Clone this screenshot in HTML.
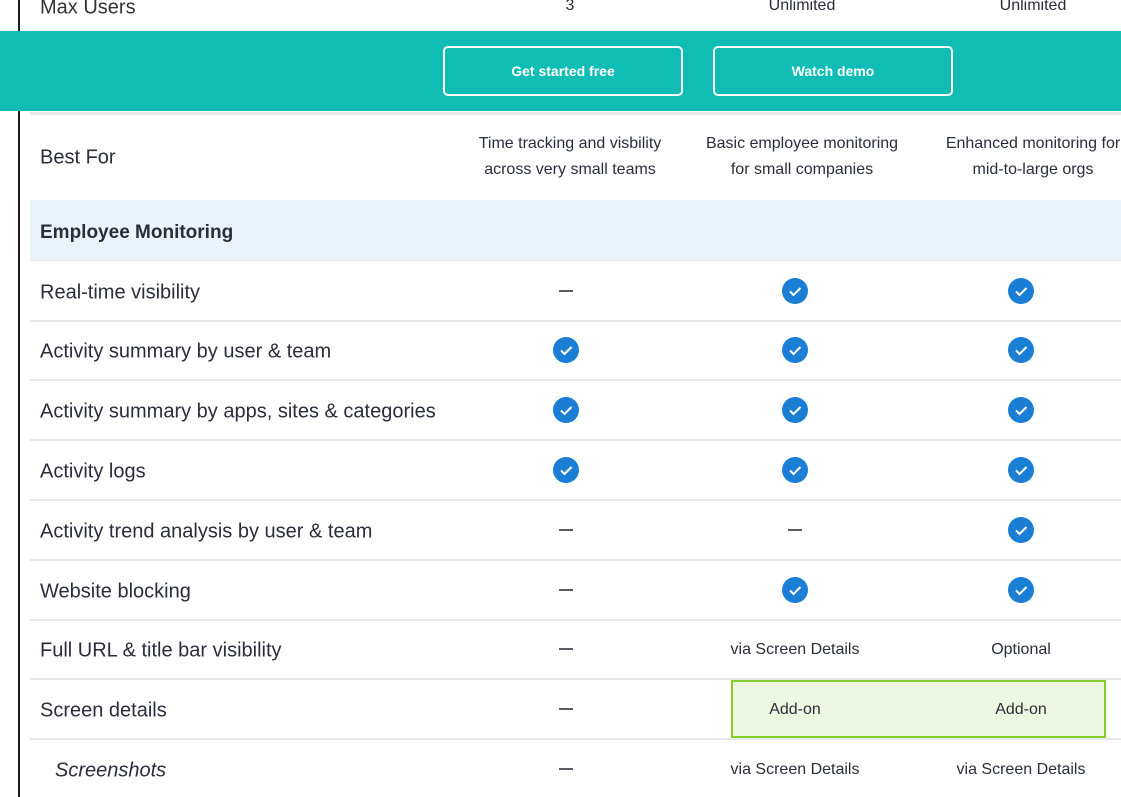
<!DOCTYPE html>
<html><head><meta charset="utf-8"><style>
*{margin:0;padding:0;box-sizing:border-box}
body{width:1121px;height:797px;overflow:hidden;background:#fff;font-family:"Liberation Sans",sans-serif;color:#2b2d3a;position:relative}
.a{position:absolute;white-space:nowrap}
.lbl{left:40px;font-size:20px;transform:translateY(-50%);margin-top:1px}
.c{transform:translate(-50%,-50%);text-align:center;margin-top:1px}
.sm{font-size:16px;line-height:26px}
.line{position:absolute;left:30px;right:0;height:2px;background:#e8e8ea}
.chk{position:absolute;width:26px;height:26px;margin:-13px 0 0 -13px;border-radius:50%;background:#1a7fd4}
.chk svg{position:absolute;left:0;top:0}
.dash{position:absolute;width:14px;height:2px;margin:-1px 0 0 -7px;background:#5a5c66}
.btn{position:absolute;top:46px;width:240px;height:50px;border:2px solid #fff;border-radius:5px;color:#fff;font-size:14px;font-weight:bold;text-align:center;line-height:46px}
</style></head><body>
<div class="a" style="left:18px;top:0;width:2px;height:797px;background:#1e1e1e"></div>

<div class="a lbl" style="top:7px;color:#333">Max Users</div>
<div class="a c sm" style="left:570px;top:5px">3</div>
<div class="a c sm" style="left:802px;top:5px">Unlimited</div>
<div class="a c sm" style="left:1033px;top:5px">Unlimited</div>

<div class="a lbl" style="top:74px">Data History</div>
<div class="a c sm" style="left:802px;top:64px">6 months</div>
<div class="a c" style="left:802px;top:87px;font-size:12px">(add-on available)</div>
<div class="a c sm" style="left:1033px;top:64px">6 months</div>
<div class="a c" style="left:1033px;top:87px;font-size:12px">(add-on available)</div>

<div class="a" style="left:0;top:31px;width:1121px;height:80px;background:#10bdb5"></div>
<div class="btn" style="left:443px">Get started free</div>
<div class="btn" style="left:713px">Watch demo</div>

<div class="line" style="top:112px;height:3px"></div>
<div class="a lbl" style="top:157px">Best For</div>
<div class="a c sm" style="left:570px;top:156px">Time tracking and visbility<br>across very small teams</div>
<div class="a c sm" style="left:802px;top:156px">Basic employee monitoring<br>for small companies</div>
<div class="a c sm" style="left:1033px;top:156px">Enhanced monitoring for<br>mid-to-large orgs</div>

<div class="a" style="left:30px;top:200px;right:0;height:61px;background:#eaf2fa"></div>
<div class="a lbl" style="top:232px;font-weight:bold;font-size:19px">Employee Monitoring</div>
<div class="line" style="top:260px;height:1px"></div>

<div class="a lbl" style="top:292px">Real-time visibility</div>
<div class="line" style="top:320px"></div>
<div class="a lbl" style="top:351px">Activity summary by user &amp; team</div>
<div class="line" style="top:379px"></div>
<div class="a lbl" style="top:411px">Activity summary by apps, sites &amp; categories</div>
<div class="line" style="top:439px"></div>
<div class="a lbl" style="top:471px">Activity logs</div>
<div class="line" style="top:499px"></div>
<div class="a lbl" style="top:531px">Activity trend analysis by user &amp; team</div>
<div class="line" style="top:559px"></div>
<div class="a lbl" style="top:591px">Website blocking</div>
<div class="line" style="top:619px"></div>
<div class="a lbl" style="top:650px">Full URL &amp; title bar visibility</div>
<div class="line" style="top:678px"></div>
<div class="a lbl" style="top:710px">Screen details</div>
<div class="line" style="top:738px"></div>
<div class="a lbl" style="top:770px;left:55px;font-style:italic">Screenshots</div>

<div class="dash" style="left:566px;top:291px"></div>
<div class="chk" style="left:795px;top:291px"><svg width="26" height="26"><path d="M8 13.5l3.5 3.5 7-7" fill="none" stroke="#fff" stroke-width="2"/></svg></div>
<div class="chk" style="left:1021px;top:291px"><svg width="26" height="26"><path d="M8 13.5l3.5 3.5 7-7" fill="none" stroke="#fff" stroke-width="2"/></svg></div>
<div class="chk" style="left:566px;top:350px"><svg width="26" height="26"><path d="M8 13.5l3.5 3.5 7-7" fill="none" stroke="#fff" stroke-width="2"/></svg></div>
<div class="chk" style="left:795px;top:350px"><svg width="26" height="26"><path d="M8 13.5l3.5 3.5 7-7" fill="none" stroke="#fff" stroke-width="2"/></svg></div>
<div class="chk" style="left:1021px;top:350px"><svg width="26" height="26"><path d="M8 13.5l3.5 3.5 7-7" fill="none" stroke="#fff" stroke-width="2"/></svg></div>
<div class="chk" style="left:566px;top:410px"><svg width="26" height="26"><path d="M8 13.5l3.5 3.5 7-7" fill="none" stroke="#fff" stroke-width="2"/></svg></div>
<div class="chk" style="left:795px;top:410px"><svg width="26" height="26"><path d="M8 13.5l3.5 3.5 7-7" fill="none" stroke="#fff" stroke-width="2"/></svg></div>
<div class="chk" style="left:1021px;top:410px"><svg width="26" height="26"><path d="M8 13.5l3.5 3.5 7-7" fill="none" stroke="#fff" stroke-width="2"/></svg></div>
<div class="chk" style="left:566px;top:470px"><svg width="26" height="26"><path d="M8 13.5l3.5 3.5 7-7" fill="none" stroke="#fff" stroke-width="2"/></svg></div>
<div class="chk" style="left:795px;top:470px"><svg width="26" height="26"><path d="M8 13.5l3.5 3.5 7-7" fill="none" stroke="#fff" stroke-width="2"/></svg></div>
<div class="chk" style="left:1021px;top:470px"><svg width="26" height="26"><path d="M8 13.5l3.5 3.5 7-7" fill="none" stroke="#fff" stroke-width="2"/></svg></div>
<div class="dash" style="left:566px;top:530px"></div>
<div class="dash" style="left:795px;top:530px"></div>
<div class="chk" style="left:1021px;top:530px"><svg width="26" height="26"><path d="M8 13.5l3.5 3.5 7-7" fill="none" stroke="#fff" stroke-width="2"/></svg></div>
<div class="dash" style="left:566px;top:590px"></div>
<div class="chk" style="left:795px;top:590px"><svg width="26" height="26"><path d="M8 13.5l3.5 3.5 7-7" fill="none" stroke="#fff" stroke-width="2"/></svg></div>
<div class="chk" style="left:1021px;top:590px"><svg width="26" height="26"><path d="M8 13.5l3.5 3.5 7-7" fill="none" stroke="#fff" stroke-width="2"/></svg></div>
<div class="dash" style="left:566px;top:649px"></div>
<div class="a c sm" style="left:795px;top:649px">via Screen Details</div>
<div class="a c sm" style="left:1021px;top:649px">Optional</div>
<div class="dash" style="left:566px;top:709px"></div>
<div class="a" style="left:731px;top:680px;width:375px;height:58px;background:#eef7df;border:2px solid #86cf2a"></div>
<div class="a c sm" style="left:795px;top:709px">Add-on</div>
<div class="a c sm" style="left:1021px;top:709px">Add-on</div>
<div class="dash" style="left:566px;top:769px"></div>
<div class="a c sm" style="left:795px;top:769px">via Screen Details</div>
<div class="a c sm" style="left:1021px;top:769px">via Screen Details</div>
</body></html>
